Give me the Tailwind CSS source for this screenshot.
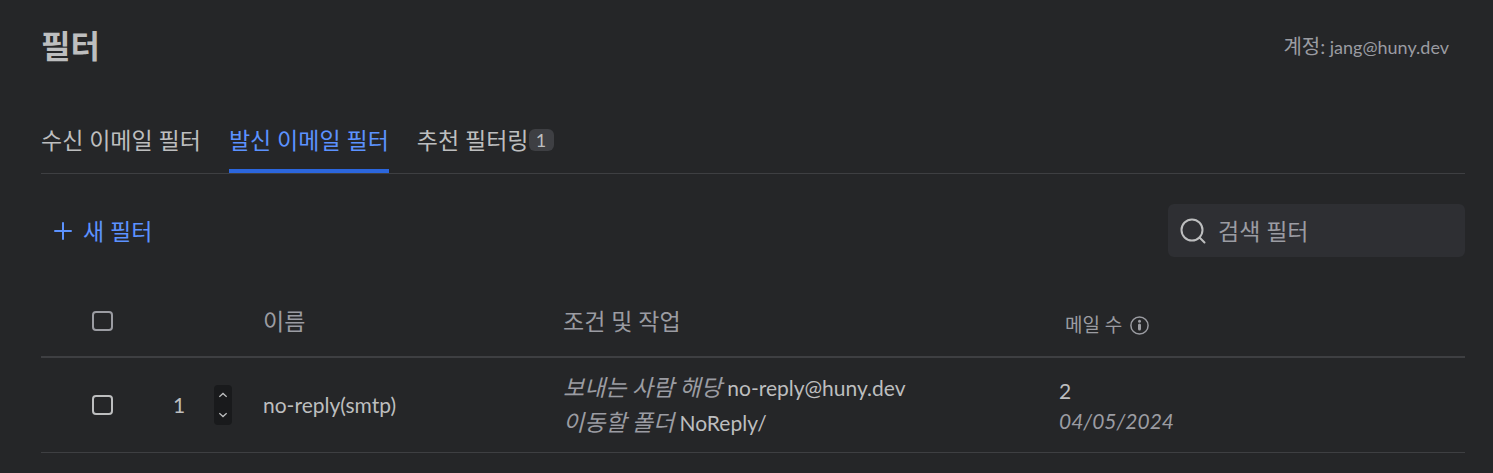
<!DOCTYPE html>
<html lang="ko">
<head>
  <meta charset="UTF-8">
  <meta name="viewport" content="width=device-width, initial-scale=1">
  <title>필터</title>
  <!-- Tailwind for styling -->
  <script src="https://cdn.jsdelivr.net/npm/@tailwindcss/browser@4"></script>
</head>
<body class="bg-[#252628] min-h-screen font-['Lato','Noto_Sans_CJK_KR',sans-serif] text-[#bdbebf] pl-[41px] pr-7 pt-[22px]">
  <header class="flex items-center justify-between pr-4">
    <h1 class="text-[32px] leading-[48px] font-bold">필터</h1>
    <p class="text-lg text-[#9b9ca2]"><span class="text-xl">계정:</span> jang@huny.dev</p>
  </header>

  <nav class="flex gap-7 mt-[50px] border-b border-[#3e3f42] text-[23px] leading-8">
    <a href="#incoming" class="pt-1 pb-4">수신 이메일 필터</a>
    <a href="#outgoing" aria-current="page" class="pt-1 pb-[13px] border-b-4 border-[#2b66dd] text-[#5c92ff]">발신 이메일 필터</a>
    <a href="#recommended" class="flex items-center pt-1 pb-[17px]">추천 필터링<span class="bg-[#3e3f43] rounded-md w-[25px] h-[22px] text-center text-lg leading-[23px]">1</span></a>
  </nav>

  <div class="flex items-center justify-between mt-[30px]">
    <button type="button" class="flex items-center gap-[11px] pl-[13px] text-[23px] leading-8 text-[#5c92ff]">
      <svg class="w-[18px] h-[18px]" viewBox="0 0 18 18" fill="none" stroke="currentColor" stroke-width="2" stroke-linecap="round" aria-hidden="true"><path d="M9 1v16M1 9h16"/></svg>
      새 필터
    </button>
    <label class="flex items-center gap-3 w-[297px] h-[53px] px-3 rounded-md bg-[#2e2f33]">
      <svg class="w-[26px] h-[26px] shrink-0" viewBox="0 0 26 26" fill="none" stroke="#bdbebf" stroke-width="2" stroke-linecap="round" aria-hidden="true"><circle cx="12" cy="12" r="10.5"/><path d="M19.5 19.5l5 5"/></svg>
      <input type="text" aria-label="검색 필터" placeholder="검색 필터" class="min-w-0 flex-1 bg-transparent outline-none text-[23px] leading-8 placeholder:text-[#9b9ca2]">
    </label>
  </div>

  <table class="w-full table-fixed mt-[29px] text-left">
    <colgroup>
      <col class="w-[123px]">
      <col class="w-[99px]">
      <col class="w-[300px]">
      <col class="w-[496px]">
      <col>
    </colgroup>
    <thead class="text-[23px] leading-8 text-[#9b9ca2]">
      <tr class="h-[71px] border-b-2 border-[#3e3f42]">
        <th class="pl-[51px]"><input type="checkbox" aria-label="모두 선택" class="block appearance-none w-[21px] h-5 rounded border-2 border-[#9b9ca2]"></th>
        <td></td>
        <th scope="col" class="font-normal">이름</th>
        <th scope="col" class="font-normal">조건 및 작업</th>
        <th scope="col" class="font-normal pl-1.5 pt-2">
          <div class="flex items-center gap-2 text-[19px] leading-7">
            메일 수
            <svg class="w-[19px] h-[19px]" viewBox="0 0 19 19" fill="none" stroke="currentColor" aria-hidden="true"><circle cx="9.5" cy="9.5" r="8.6" stroke-width="1.5"/><path d="M9.5 9v4" stroke-width="3" stroke-linecap="round"/><circle cx="9.5" cy="5.2" r="1.5" fill="currentColor" stroke="none"/></svg>
          </div>
        </th>
      </tr>
    </thead>
    <tbody class="text-[21px] leading-[30px]">
      <tr class="h-[95px] border-b border-[#3e3f42]">
        <td class="pl-[51px]"><input type="checkbox" aria-label="no-reply(smtp)" class="block appearance-none w-[21px] h-5 rounded border-2 border-[#bdbebf]"></td>
        <td class="pl-[9px]">
          <div class="flex items-center justify-between pr-[31px]">
            1
            <div class="flex flex-col w-[18px] h-10 rounded-sm bg-[#191a1c]">
              <button type="button" aria-label="위로" class="flex flex-1 items-center justify-center"><svg class="w-2 h-1.5" viewBox="0 0 8 6" fill="none" stroke="currentColor" stroke-width="1.4" aria-hidden="true"><path d="M.3 4.8L4 1.5l3.7 3.3"/></svg></button>
              <button type="button" aria-label="아래로" class="flex flex-1 items-center justify-center"><svg class="w-2 h-1.5" viewBox="0 0 8 6" fill="none" stroke="currentColor" stroke-width="1.4" aria-hidden="true"><path d="M.3 1.2L4 4.5l3.7-3.3"/></svg></button>
            </div>
          </div>
        </td>
        <td>no-reply(smtp)</td>
        <td class="leading-[35px]">
          <p><i class="text-[23px] text-[#9b9ca2]">보내는 사람 해당</i> no-reply@huny.dev</p>
          <p><i class="text-[23px] text-[#9b9ca2]">이동할 폴더</i> NoReply/</p>
        </td>
        <td class="pt-0.5">
          <p>2</p>
          <p class="italic text-[#9b9ca2]">04/05/2024</p>
        </td>
      </tr>
    </tbody>
  </table>
</body>
</html>
